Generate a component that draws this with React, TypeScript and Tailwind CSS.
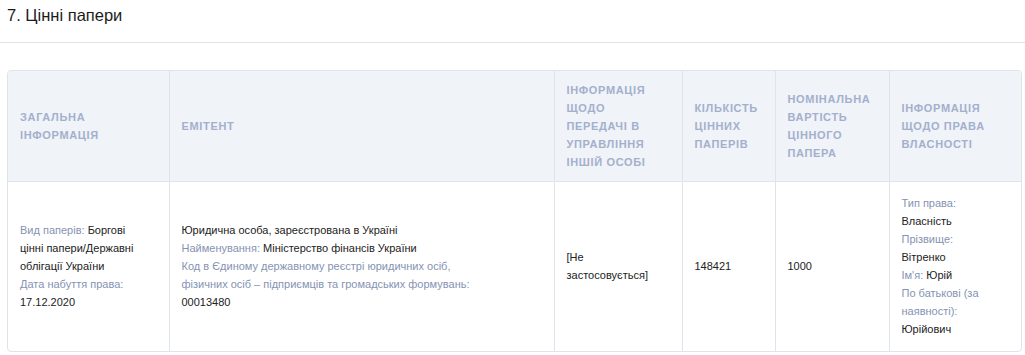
const headers = [
  { t: 'Загальна інформація', pr: 'pr-3' },
  { t: 'Емітент', pr: 'pr-3' },
  { t: 'Інформація щодо передачі в управління іншій особі', pr: 'pr-6' },
  { t: 'Кількість цінних паперів', pr: 'pr-0' },
  { t: 'Номінальна вартість цінного папера', pr: 'pr-2' },
  { t: 'Інформація щодо права власності', pr: 'pr-3' },
];

function L({ children }: { children: React.ReactNode }) {
  return <span className="text-[#8593b3]">{children}</span>;
}

export default function App() {
  return (
    <div className="bg-white font-['Liberation_Sans',Arial,sans-serif] pb-1">
      <h2 className="px-[7px] pt-[5px] h-[42px] text-[16.5px] leading-[20px] text-[#1c1c1c]">7. Цінні папери</h2>
      <div className="border-t border-[#e3e3e3] pt-[27px]">
        <div className="ml-[7px] mr-[3px] rounded-[4px] border border-[#dfe3ea] overflow-hidden">
          <table className="w-full table-fixed border-collapse">
            <colgroup>
              <col className="w-[161px]" />
              <col className="w-[385px]" />
              <col className="w-[128px]" />
              <col className="w-[93px]" />
              <col className="w-[114px]" />
              <col />
            </colgroup>
            <thead>
              <tr className="bg-[#f0f3f8] h-[110px]">
                {headers.map((h, i) => (
                  <th
                    key={h.t}
                    className={`pl-3 ${h.pr} py-[10px] text-left align-middle uppercase text-[11px] leading-[18px] font-bold tracking-[0.06em] text-[#a3b0cd] border-b border-[#dfe3ea] ${i < 5 ? 'border-r' : ''}`}
                  >
                    {h.t}
                  </th>
                ))}
              </tr>
            </thead>
            <tbody className="text-[11px] leading-[18px] text-[#222]">
              <tr className="h-[169px]">
                <td className="pl-3 pr-[30px] py-3 align-middle border-r border-[#dfe3ea]">
                  <L>Вид паперів: </L>Боргові цінні папери/Державні облігації України
                  <br />
                  <L>Дата набуття права: </L>17.12.2020
                </td>
                <td className="pl-3 pr-2 py-3 align-middle border-r border-[#dfe3ea]">
                  Юридична особа, зареєстрована в Україні
                  <br />
                  <L>Найменування: </L>Міністерство фінансів України
                  <br />
                  <L>
                    Код в Єдиному державному реєстрі юридичних осіб,
                    <br />
                    фізичних осіб – підприємців та громадських формувань:
                  </L>
                  <br />
                  00013480
                </td>
                <td className="pl-3 pr-6 py-3 align-middle border-r border-[#dfe3ea]">[Не застосовується]</td>
                <td className="pl-3 pr-2 py-3 align-middle border-r border-[#dfe3ea]">148421</td>
                <td className="pl-3 pr-2 py-3 align-middle border-r border-[#dfe3ea]">1000</td>
                <td className="pl-3 pr-[36px] py-3 align-middle">
                  <L>Тип права: </L>Власність
                  <br />
                  <L>Прізвище: </L>Вітренко
                  <br />
                  <L>Ім'я: </L>Юрій
                  <br />
                  <L>По батькові (за наявності): </L>Юрійович
                </td>
              </tr>
            </tbody>
          </table>
        </div>
      </div>
    </div>
  );
}
